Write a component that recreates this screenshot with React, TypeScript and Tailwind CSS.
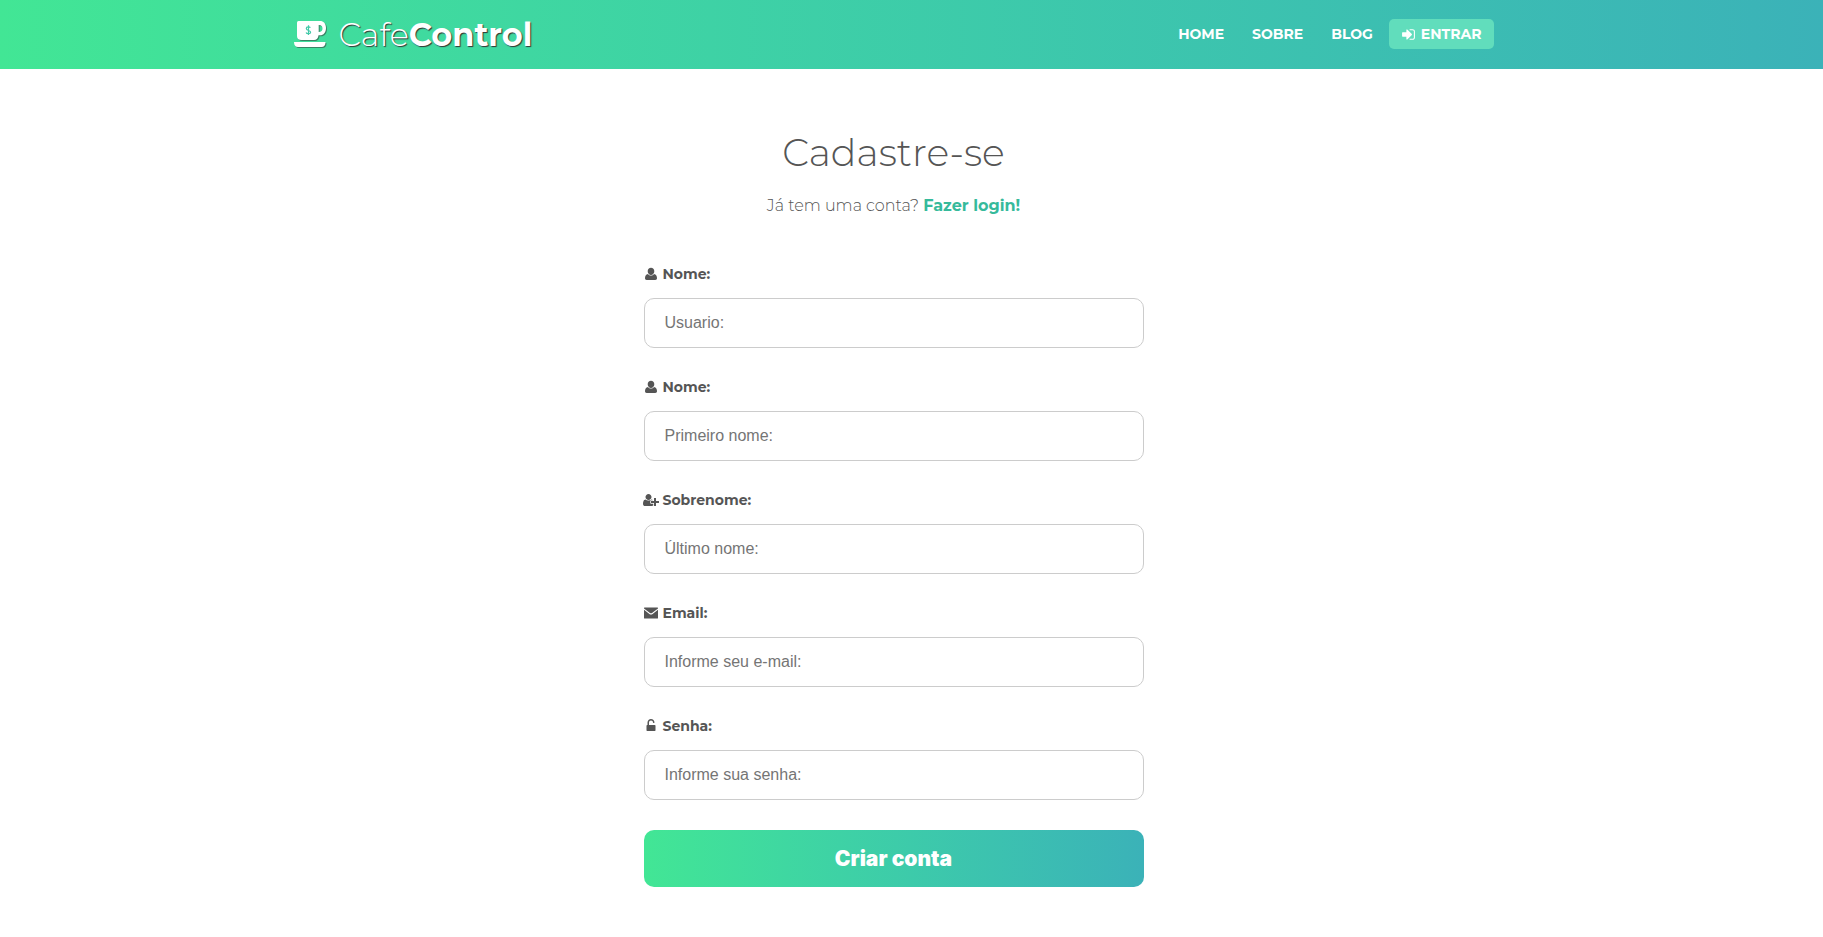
import React from "react";

type IconProps = { path: string; viewBox?: string; className: string };

function Icon({ path, viewBox = "0 0 1792 1792", className }: IconProps) {
  return (
    <svg viewBox={viewBox} className={className} fill="currentColor" aria-hidden="true">
      <path d={path} />
    </svg>
  );
}

const USER =
  "M7 .8C8.900 .8 10.300 2.200 10.300 4.200S8.900 7.900 7 7.900S3.700 6.200 3.700 4.200S5.100 .8 7 .8ZM4 6.900C4.800 8 5.800 8.600 7 8.600S9.200 8 10 6.900C12.200 7.300 13 8.900 13 11.300C13 12.500 12.300 13 11.300 13H2.700C1.700 13 1 12.500 1 11.300C1 8.900 1.800 7.300 4 6.900Z";
const USER_PLUS =
  "M704 896q-159 0-271.5-112.5t-112.5-271.5 112.5-271.5 271.5-112.5 271.5 112.5 112.5 271.5-112.5 271.5-271.5 112.5zm960 128h352q13 0 22.5 9.5t9.5 22.5v192q0 13-9.5 22.5t-22.5 9.5h-352v352q0 13-9.5 22.5t-22.5 9.5h-192q-13 0-22.5-9.5t-9.5-22.5v-352h-352q-13 0-22.5-9.5t-9.5-22.5v-192q0-13 9.5-22.5t22.5-9.5h352v-352q0-13 9.5-22.5t22.5-9.5h192q13 0 22.5 9.5t9.5 22.5v352zm-736 224q0 52 38 90t90 38h256v238q-68 50-171 50h-874q-121 0-194-69t-73-190q0-53 3.5-103.5t14-109 26.5-108.5 43-97.5 62-81 85.5-53.5 111.5-20q19 0 39 17 79 61 154.5 91.5t164.5 30.5 164.5-30.5 154.5-91.5q20-17 39-17 132 0 217 96h-223q-52 0-90 38t-38 90v192z";
const ENVELOPE =
  "M.5 1.500H13.500Q14 1.500 14 2V2.400L8 7Q7 7.700 6 7L0 2.400V2Q0 1.500 .5 1.500ZM0 3.800L5.400 7.900Q7 9 8.600 7.900L14 3.800V12Q14 12.600 13.400 12.600H.6Q0 12.600 0 12Z";
const UNLOCK =
  "M1376 768q40 0 68 28t28 68v576q0 40-28 68t-68 28h-960q-40 0-68-28t-28-68v-576q0-40 28-68t68-28h32v-320q0-185 131.5-316.5t316.5-131.5 316.5 131.5 131.5 316.5q0 26-19 45t-45 19h-64q-26 0-45-19t-19-45q0-106-75-181t-181-75-181 75-75 181v320h736z";
const SIGN_IN =
  "M1312 896q0 26-19 45l-544 544q-19 19-45 19t-45-19-19-45v-288h-448q-26 0-45-19t-19-45v-384q0-26 19-45t45-19h448v-288q0-26 19-45t45-19 45 19l544 544q19 19 19 45zm352-352v704q0 119-84.5 203.5t-203.5 84.5h-320q-13 0-22.5-9.5t-9.5-22.5q0-4-1-20t-.5-26.5 3-23.5 10-19.5 20.5-6.5h320q66 0 113-47t47-113v-704q0-66-47-113t-113-47h-312l-11.5-1-11.5-3-8-5.5-7-9-2-13.5q0-4-1-20t-.5-26.5 3-23.5 10-19.5 20.5-6.5h320q119 0 203.5 84.5t84.5 203.5z";

function CupLogo() {
  return (
    <svg viewBox="0 0 34 28" className="h-7 w-[34px] drop-shadow-[1px_1px_0_#3338]" aria-hidden="true">
      <path
        fill="#fff"
        fillRule="evenodd"
        d="M4.500 0H26C29.500 0 32 2.500 32 7S29.500 14.300 26 14.300H24.500C24.300 17.500 22.500 19 20 19H7.500C4.500 19 3 17.500 3 15V2C3 .7 3.500 0 4.500 0ZM24.700 4V11C27.500 11 28.500 9.500 28.500 7.500S27.500 4 24.700 4Z"
      />
      <path fill="#fff" d="M0 21H31.500C31.500 24.500 30 26 27.500 26H4C1.500 26 0 24.500 0 21Z" />
      <path
        fill="none"
        stroke="#42c9a8"
        strokeWidth="1.200"
        d="M16.300 6.800C15.800 5.600 12.300 5.300 12.300 7.500S16.600 9.200 16.600 11.200S12.800 13.200 12.100 11.600M14.500 4.300V14"
      />
    </svg>
  );
}

const FIELDS = [
  { id: "username", label: "Nome:", placeholder: "Usuario:", type: "text", path: USER, viewBox: "0 0 14 14" },
  { id: "first-name", label: "Nome:", placeholder: "Primeiro nome:", type: "text", path: USER, viewBox: "0 0 14 14" },
  {
    id: "last-name",
    label: "Sobrenome:",
    placeholder: "Último nome:",
    type: "text",
    path: USER_PLUS,
    viewBox: "0 0 2048 1792",
  },
  {
    id: "email",
    label: "Email:",
    placeholder: "Informe seu e-mail:",
    type: "email",
    path: ENVELOPE,
    viewBox: "0 0 14 14",
  },
  { id: "password", label: "Senha:", placeholder: "Informe sua senha:", type: "password", path: UNLOCK },
];

export default function App() {
  return (
    <div className="min-h-screen bg-white font-['Montserrat','Inter',sans-serif] text-[#555555]">
      <header className="bg-linear-to-r from-[#42e695] to-[#3bb2b8] pr-9 text-white">
        <div className="mx-auto flex max-w-[1200px] items-center justify-between pt-[15px] pb-3.5">
          <a href="#" className="flex items-center gap-[11px]">
            <CupLogo />
            <span className="text-[32px] leading-10 font-light [text-shadow:1px_1px_1px_#333333]">
              Cafe<b className="font-bold">Control</b>
            </span>
          </a>
          <nav className="flex items-center pb-0.5 text-sm font-bold">
            <a href="#" className="px-3.5">HOME</a>
            <a href="#" className="px-3.5">SOBRE</a>
            <a href="#" className="px-3.5">BLOG</a>
            <a href="#" className="ml-0.5 flex h-[30px] items-center gap-[5px] rounded-[5px] bg-[#61ddbc] px-3">
              <Icon path={SIGN_IN} className="size-[15px]" />
              ENTRAR
            </a>
          </nav>
        </div>
      </header>

      <main className="pr-9">
        <div className="mx-auto flex max-w-[500px] flex-col pt-[60px] pb-[50px]">
          <h1 className="text-center text-[38px] leading-12 font-light">Cadastre-se</h1>
          <p className="mt-[17px] text-center text-base leading-6 font-light">
            Já tem uma conta?{" "}
            <a href="#" className="font-bold text-[#36ba9b]">Fazer login!</a>
          </p>

          <form className="mt-[46px] flex flex-col" onSubmit={(e) => e.preventDefault()}>
            <div className="flex flex-col gap-[29px]">
              {FIELDS.map((f) => (
                <div key={f.id} className="flex flex-col gap-3.5">
                  <label htmlFor={f.id} className="flex items-center gap-[5px] text-sm leading-5 font-bold">
                    <span className="flex w-3.5 justify-center">
                      <Icon path={f.path} viewBox={f.viewBox} className="h-3.5 w-auto shrink-0" />
                    </span>
                    {f.label}
                  </label>
                  <input
                    id={f.id}
                    type={f.type}
                    placeholder={f.placeholder}
                    className="h-[50px] w-full rounded-[10px] border border-[#cccccc] px-5 font-['Liberation_Sans',Arial,sans-serif] text-base placeholder:text-[#757575]"
                  />
                </div>
              ))}
            </div>
            <button
              type="submit"
              className="mt-[30px] h-[57px] rounded-[10px] bg-linear-to-r from-[#42e695] to-[#3bb2b8] font-['Arial_Black','Inter',sans-serif] text-[21px] font-black text-white"
            >
              Criar conta
            </button>
          </form>
        </div>
      </main>
    </div>
  );
}
